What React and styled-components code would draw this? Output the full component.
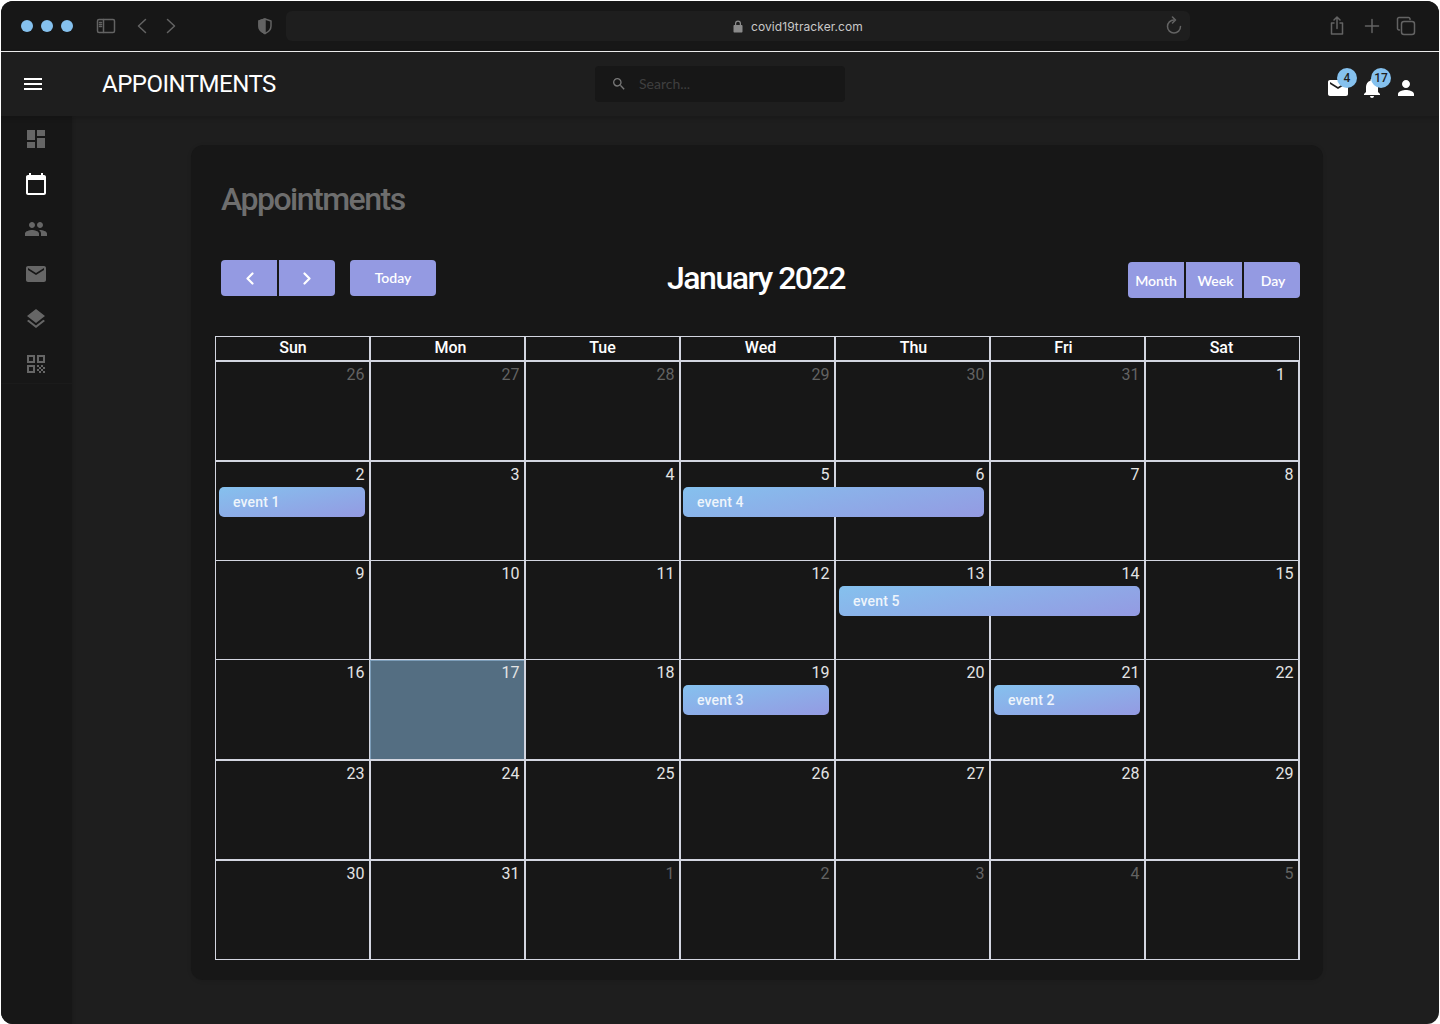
import React from "react";
import styled, { createGlobalStyle } from "styled-components";
import {
  MdDashboard,
  MdCalendarToday,
  MdPeople,
  MdEmail,
  MdLayers,
  MdQrCode,
  MdMenu,
  MdSearch,
  MdNotifications,
  MdPerson,
} from "react-icons/md";

const LINE = "#d3d6e0";

const GlobalStyle = createGlobalStyle`
  html, body {
    margin: 0;
    padding: 0;
    background: #fff;
  }
  * { box-sizing: border-box; }
`;

const Window = styled.div`
  width: 1438px;
  height: 1023px;
  margin: 1px 1px 0;
  display: flex;
  flex-direction: column;
  overflow: hidden;
  border-radius: 12px;
  background: #1e1e1e;
  font-family: Roboto, sans-serif;
`;

const BrowserBar = styled.div`
  height: 51px;
  flex: none;
  display: flex;
  align-items: center;
  padding: 0 24px 0 20px;
  background: #171717;
  border-bottom: 1px solid #f2f2f2;
`;

const Dots = styled.div`
  display: flex;
  gap: 8px;
  margin-right: 23px;
`;

const Dot = styled.span`
  width: 12px;
  height: 12px;
  border-radius: 50%;
  background: #85c1ee;
`;

const BarIcon = styled.svg`
  flex: none;
  margin-left: ${({ $gap }) => $gap || 0}px;
  fill: none;
  stroke: #636363;
  stroke-width: 1.5;
  stroke-linecap: round;
  stroke-linejoin: round;
`;

const AddressBar = styled.div`
  width: 904px;
  height: 30px;
  margin-left: 13px;
  flex: none;
  display: flex;
  align-items: center;
  padding: 0 7px 0 447px;
  border-radius: 6px;
  background: #1e1e1e;
`;

const Url = styled.span`
  margin-left: 8px;
  margin-right: auto;
  font-family: Inter, sans-serif;
  font-size: 12px;
  letter-spacing: 0.08px;
  color: #c9c9c9;
`;

const AppHeader = styled.header`
  height: 64px;
  flex: none;
  display: flex;
  align-items: center;
  position: relative;
  z-index: 2;
  padding: 0 21px 0 20px;
  background: #1e1e1e;
  box-shadow: 0 2px 5px rgba(0, 0, 0, 0.18);
  color: #fff;
`;

const AppTitle = styled.h1`
  width: 493px;
  margin: 0 0 0 57px;
  font-size: 24px;
  font-weight: 400;
  letter-spacing: -0.5px;
  color: #fff;
`;

const Search = styled.div`
  width: 250px;
  height: 36px;
  display: flex;
  align-items: center;
  gap: 12px;
  padding-left: 16px;
  border-radius: 4px;
  background: #171717;
`;

const SearchText = styled.span`
  margin-bottom: 2px;
  font-family: Lato, sans-serif;
  font-size: 14px;
  color: #3f3f3f;
`;

const HeaderIcons = styled.div`
  margin-left: auto;
  display: flex;
  align-items: center;
  gap: 10px;
  padding-top: 8px;
`;

const IconWrap = styled.div`
  position: relative;
  width: 24px;
  height: 24px;
`;

const CountBadge = styled.span`
  position: absolute;
  top: -8px;
  left: 11px;
  width: 20px;
  height: 20px;
  display: flex;
  align-items: center;
  justify-content: center;
  border-radius: 50%;
  background: #85c1ee;
  font-size: 12px;
  font-weight: 500;
  color: #1e1e1e;
`;

const Body = styled.div`
  flex: 1;
  min-height: 0;
  display: flex;
`;

const Sidebar = styled.aside`
  width: 71px;
  flex: none;
  background: #171717;
  box-shadow: 1px 0 3px rgba(0, 0, 0, 0.12);
`;

const Nav = styled.nav`
  display: flex;
  flex-direction: column;
  align-items: center;
  gap: 21px;
  padding: 11px 1px 7px 0;
  border-bottom: 1px solid #1b1b1b;
`;

const NavItem = styled.div`
  width: 24px;
  height: 24px;
  color: ${({ $active }) => ($active ? "#fff" : "#666")};
`;

const Main = styled.main`
  flex: 1;
  padding: 29px 116px 42px 119px;
`;

const Card = styled.section`
  height: 835px;
  padding: 35px 23px 20px 24px;
  border-radius: 12px;
  background: #171717;
  box-shadow: 0 1px 4px rgba(0, 0, 0, 0.1);
`;

const PageTitle = styled.h2`
  margin: 0 0 42px 6px;
  font-size: 32px;
  line-height: 38px;
  font-weight: 500;
  letter-spacing: -1.5px;
  color: #6e6e6e;
`;

const Toolbar = styled.div`
  height: 40px;
  margin-bottom: 36px;
  padding-left: 6px;
  display: grid;
  grid-template-columns: 1fr auto 1fr;
  align-items: start;
`;

const Group = styled.div`
  display: flex;
  gap: ${({ $gap }) => $gap || 0}px;
  justify-content: ${({ $end }) => ($end ? "flex-end" : "flex-start")};
  margin-top: ${({ $top }) => $top || 0}px;
`;

const Button = styled.button`
  width: ${({ $w }) => $w}px;
  height: 36px;
  margin-left: ${({ $ml }) => $ml || 0}px;
  padding: 0 0 ${({ $pb }) => $pb || 0}px ${({ $pl }) => $pl || 0}px;
  display: flex;
  align-items: center;
  justify-content: center;
  border: 0;
  border-radius: ${({ $r }) => $r || "0"};
  background: #949ae2;
  font-family: Lato, sans-serif;
  font-size: 14px;
  font-weight: 600;
  color: #fff;
`;

const Chevron = styled.svg`
  fill: none;
  stroke: #fff;
  stroke-width: 2.2;
  stroke-linecap: round;
  stroke-linejoin: round;
`;

const MonthTitle = styled.h2`
  margin: 0 9px 0 0;
  font-size: 32px;
  line-height: 36px;
  font-weight: 500;
  letter-spacing: -1.5px;
  color: #fff;
`;

const Calendar = styled.div`
  width: 1085px;
  border-top: 1px solid ${LINE};
  border-left: 1px solid ${LINE};
`;

const HeadRow = styled.div`
  display: grid;
  grid-template-columns: repeat(6, 155px) 154px;
  height: 25px;
`;

const HeadCell = styled.div`
  display: flex;
  align-items: center;
  justify-content: center;
  padding-left: ${({ $shift }) => ($shift > 0 ? $shift * 2 : 0)}px;
  padding-right: ${({ $shift }) => ($shift < 0 ? -$shift * 2 : 0)}px;
  padding-bottom: 2px;
  border-right: 2px solid ${LINE};
  border-bottom: 2px solid ${LINE};
  font-size: 16px;
  font-weight: 500;
  color: #fff;

  &:last-child {
    border-right-width: 1px;
  }
`;

const Week = styled.div`
  position: relative;
  display: grid;
  grid-template-columns: repeat(6, 155px) 154px;
  height: ${({ $h }) => $h}px;
`;

const Day = styled.div`
  margin-left: ${({ $today }) => ($today ? -1 : 0)}px;
  padding: 4px ${({ $pad }) => $pad || 4.5}px 0 0;
  text-align: right;
  border-right: 2px solid ${LINE};
  border-bottom: ${({ $b }) => $b}px solid ${LINE};
  background: ${({ $today }) => ($today ? "#546e82" : "transparent")};
  box-shadow: ${({ $today }) =>
    $today ? "inset 1px 0 0 #7b9cb8, inset 0 1px 0 #7b9cb8" : "none"};
  font-size: 16px;
  line-height: 18px;
  color: ${({ $muted }) => ($muted ? "#636363" : "#e4e4e4")};

  &:last-of-type {
    border-right-width: 1px;
    padding-right: ${({ $pad }) => $pad || 3}px;
  }
`;

const EventLayer = styled.div`
  position: absolute;
  inset: 25px 0 auto 0;
  display: grid;
  grid-template-columns: repeat(6, 155px) 154px;
`;

const Event = styled.div`
  grid-column: ${({ $col }) => $col} / span ${({ $span }) => $span};
  height: 30px;
  margin: 0 ${({ $nudge }) => 6 + ($nudge || 0)}px 0 ${({ $nudge }) => 3 - ($nudge || 0)}px;
  padding-left: 14px;
  display: flex;
  align-items: center;
  border-radius: 5px;
  background: linear-gradient(168deg, #85c1ee 0%, #949ae2 100%);
  font-size: 14px;
  font-weight: 500;
  letter-spacing: 0.15px;
  color: #eef4fb;
`;

const HEADINGS = [
  ["Sun", 0.5],
  ["Mon", 3],
  ["Tue", 0],
  ["Wed", 3],
  ["Thu", 1],
  ["Fri", -4],
  ["Sat", -1],
];

// day entries are [number, muted, today, right padding]
const WEEKS = [
  {
    h: 100,
    b: 2,
    days: [[26, 1], [27, 1], [28, 1], [29, 1], [30, 1], [31, 1], [1, 0, 0, 13]],
    events: [],
  },
  {
    h: 99,
    b: 1,
    days: [[2], [3], [4], [5], [6], [7], [8]],
    events: [
      { name: "event 1", col: 1, span: 1 },
      { name: "event 4", col: 4, span: 2, nudge: 1 },
    ],
  },
  {
    h: 99,
    b: 1,
    days: [[9], [10], [11], [12], [13], [14], [15]],
    events: [{ name: "event 5", col: 5, span: 2 }],
  },
  {
    h: 101,
    b: 2,
    days: [[16], [17, 0, 1], [18], [19], [20], [21], [22]],
    events: [
      { name: "event 3", col: 4, span: 1, nudge: 1 },
      { name: "event 2", col: 6, span: 1 },
    ],
  },
  {
    h: 100,
    b: 2,
    days: [[23], [24], [25], [26], [27], [28], [29]],
    events: [],
  },
  {
    h: 99,
    b: 1,
    days: [[30], [31], [1, 1], [2, 1], [3, 1], [4, 1], [5, 1]],
    events: [],
  },
];

export default function App() {
  return (
    <>
      <GlobalStyle />
      <Window>
        <BrowserBar>
          <Dots>
            <Dot />
            <Dot />
            <Dot />
          </Dots>
          <BarIcon width="20" height="16" viewBox="0 0 20 16">
            <rect x="1.5" y="1.5" width="17" height="13" rx="1.5" />
            <path d="M7.5 1.5v13M3.5 4.5h2M3.5 6.5h2M3.5 8.5h2" />
          </BarIcon>
          <BarIcon $gap={19} width="14" height="18" viewBox="0 0 14 18">
            <path d="M10.5 2.5 3.5 9l7 6.5" />
          </BarIcon>
          <BarIcon $gap={15} width="14" height="18" viewBox="0 0 14 18">
            <path d="M3.5 2.5 10.5 9l-7 6.5" />
          </BarIcon>
          <BarIcon $gap={79} width="16" height="18" viewBox="0 0 16 18">
            <path d="M8 2 2 4v5c0 3.500 2.600 6 6 7.500 3.400-1.500 6-4 6-7.500V4L8 2Z" />
            <path d="M8 2 2 4v5c0 3.500 2.600 6 6 7.500V2Z" fill="#636363" />
          </BarIcon>
          <AddressBar>
            <svg width="10" height="13" viewBox="0 0 10 13" fill="#8a8a8a">
              <path d="M2 5V3.500a3 3 0 0 1 6 0V5h.5c.6 0 1 .4 1 1v5.500c0 .6-.4 1-1 1h-7c-.6 0-1-.4-1-1V6c0-.6.4-1 1-1H2Zm1.200 0h3.600V3.500a1.800 1.800 0 0 0-3.600 0V5Z" />
            </svg>
            <Url>covid19tracker.com</Url>
            <BarIcon width="18" height="20" viewBox="0 0 18 20">
              <path d="M9 4a6.500 6.500 0 1 0 6.500 6.500" />
              <path d="M7.500 1 10.500 4 7.500 7" />
            </BarIcon>
          </AddressBar>
          <BarIcon $gap={139} width="16" height="20" viewBox="0 0 16 20">
            <path d="M5 7H2.500v11h11V7H11M8 12.500V1.500M5 4l3-3 3 3" />
          </BarIcon>
          <BarIcon $gap={19} width="16" height="16" viewBox="0 0 16 16">
            <path d="M8 1.500v13M1.500 8h13" />
          </BarIcon>
          <BarIcon $gap={16} width="20" height="20" viewBox="0 0 20 20">
            <rect x="5.500" y="5.500" width="13" height="13" rx="2.500" />
            <path d="M3.500 14H3a1.500 1.500 0 0 1-1.500-1.500V3A1.500 1.500 0 0 1 3 1.500h9.500A1.500 1.500 0 0 1 14 3v.5" />
          </BarIcon>
        </BrowserBar>

        <AppHeader>
          <MdMenu size={24} />
          <AppTitle>APPOINTMENTS</AppTitle>
          <Search>
            <MdSearch size={16} color="#777" />
            <SearchText>Search...</SearchText>
          </Search>
          <HeaderIcons>
            <IconWrap>
              <MdEmail size={24} />
              <CountBadge>4</CountBadge>
            </IconWrap>
            <IconWrap>
              <MdNotifications size={24} />
              <CountBadge>17</CountBadge>
            </IconWrap>
            <IconWrap>
              <MdPerson size={24} />
            </IconWrap>
          </HeaderIcons>
        </AppHeader>

        <Body>
          <Sidebar>
            <Nav>
              <NavItem><MdDashboard size={24} /></NavItem>
              <NavItem $active><MdCalendarToday size={24} /></NavItem>
              <NavItem><MdPeople size={24} /></NavItem>
              <NavItem><MdEmail size={24} /></NavItem>
              <NavItem><MdLayers size={24} /></NavItem>
              <NavItem><MdQrCode size={24} /></NavItem>
            </Nav>
          </Sidebar>
          <Main>
            <Card>
              <PageTitle>Appointments</PageTitle>
              <Toolbar>
                <Group>
                  <Group $gap={2}>
                    <Button $w={56} $pl={1} $r="4px 0 0 4px">
                      <Chevron width="8" height="13" viewBox="0 0 8 13">
                        <path d="M6.500 1.500 1.500 6.500l5 5" />
                      </Chevron>
                    </Button>
                    <Button $w={56} $r="0 4px 4px 0">
                      <Chevron width="8" height="13" viewBox="0 0 8 13">
                        <path d="M1.500 1.500 6.500 6.500l-5 5" />
                      </Chevron>
                    </Button>
                  </Group>
                  <Button $w={86} $ml={15} $pb={2} $r="4px">Today</Button>
                </Group>
                <MonthTitle>January 2022</MonthTitle>
                <Group $end $gap={2} $top={2}>
                  <Button $w={56} $r="4px 0 0 4px">Month</Button>
                  <Button $w={56} $pl={3}>Week</Button>
                  <Button $w={56} $pl={2} $r="0 4px 4px 0">Day</Button>
                </Group>
              </Toolbar>
              <Calendar>
                <HeadRow>
                  {HEADINGS.map(([name, shift]) => (
                    <HeadCell key={name} $shift={shift}>{name}</HeadCell>
                  ))}
                </HeadRow>
                {WEEKS.map((week, i) => (
                  <Week key={i} $h={week.h}>
                    {week.days.map(([n, muted, today, pad], j) => (
                      <Day
                        key={j}
                        $muted={muted}
                        $today={today}
                        $pad={pad}
                        $b={week.b}
                      >
                        {n}
                      </Day>
                    ))}
                    <EventLayer>
                      {week.events.map((ev) => (
                        <Event
                          key={ev.name}
                          $col={ev.col}
                          $span={ev.span}
                          $nudge={ev.nudge}
                        >
                          {ev.name}
                        </Event>
                      ))}
                    </EventLayer>
                  </Week>
                ))}
              </Calendar>
            </Card>
          </Main>
        </Body>
      </Window>
    </>
  );
}
